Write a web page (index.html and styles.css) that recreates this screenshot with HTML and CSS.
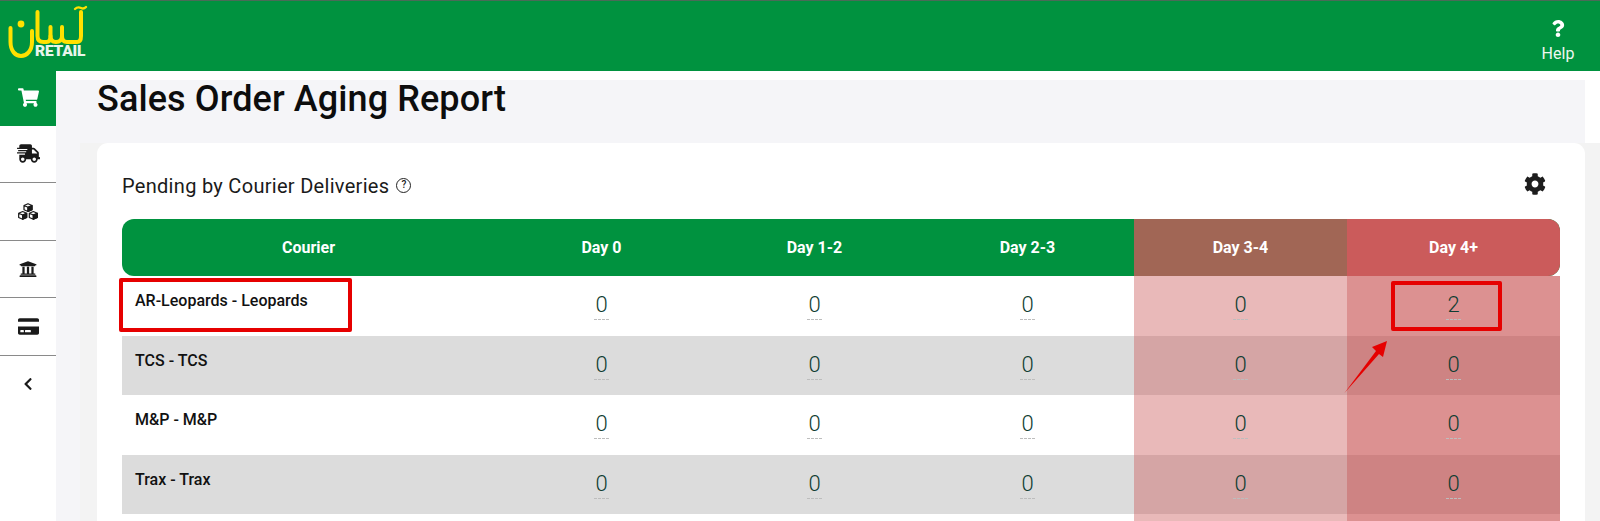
FILE: index.html
```html
<!DOCTYPE html>
<html lang="en">
<head>
  <meta charset="UTF-8" />
  <meta name="viewport" content="width=device-width, initial-scale=1.0"/>
  <title>Sales Order Aging Report</title>
  <link rel="stylesheet" href="styles.css">
</head>
<body>
  <header class="topbar">
    <div class="logo">
      <svg class="logo-mark" viewBox="0 0 90 60" aria-label="Aasan logo">
        <g fill="none" stroke="#ffe100" stroke-width="4" stroke-linecap="round" stroke-linejoin="round">
          <path d="M10.500 28v14c0 9 5 14 10.500 14s11-5 11-14v-11"/>
          <path d="M37.500 12v24c0 4 2 6 6 6h3c3 0 4-2 4-6v-9"/>
          <path d="M50.500 36c0 4 2 6 5.500 6s6-2 6-6v-9"/>
          <path d="M62 36c0 4 2 6 5 6h10c3 0 4-2 4-6V12"/>
          <path d="M75 9c2-2 4-2 6-1s3 1 5-1" stroke-width="2.400"/>
        </g>
        <circle cx="21" cy="24" r="3.400" fill="#ffe100"/>
      </svg>
      <span class="logo-text">RETAIL</span>
    </div>
    <a class="help" href="#">
      <svg class="help-icon" viewBox="0 0 384 512"><path d="M202.021 0C122.202 0 70.503 32.703 29.914 91.026c-7.363 10.58-5.093 25.086 5.178 32.874l43.138 32.709c10.373 7.865 25.132 6.026 33.253-4.148 25.049-31.381 43.63-49.449 82.757-49.449 30.764 0 68.816 19.799 68.816 49.631 0 22.552-18.617 34.134-48.993 51.164-35.423 19.86-82.299 44.576-82.299 106.405V320c0 13.255 10.745 24 24 24h72.471c13.255 0 24-10.745 24-24v-5.773c0-42.86 125.268-44.645 125.268-160.627C377.504 66.256 286.902 0 202.021 0zM192 373.459c-38.196 0-69.271 31.075-69.271 69.271 0 38.195 31.075 69.27 69.271 69.27s69.271-31.075 69.271-69.271-31.075-69.27-69.271-69.27z"/></svg>
      <span>Help</span>
    </a>
  </header>

  <div class="layout">
    <nav class="sidebar">
      <a class="nav-item active" href="#">
        <svg class="ic-cart" viewBox="0 0 576 512"><path d="M528.12 301.319l47.273-208C578.806 78.301 567.391 64 551.99 64H159.208l-9.166-44.81C147.758 8.021 137.93 0 126.529 0H24C10.745 0 0 10.745 0 24v16c0 13.255 10.745 24 24 24h69.883l70.248 343.435C147.325 417.1 136 435.222 136 456c0 30.928 25.072 56 56 56s56-25.072 56-56c0-15.674-6.447-29.835-16.824-40h209.647C430.447 426.165 424 440.326 424 456c0 30.928 25.072 56 56 56s56-25.072 56-56c0-22.172-12.888-41.332-31.579-50.405l5.517-24.276c3.413-15.018-8.002-29.319-23.403-29.319H218.117l-6.545-32h293.145c11.206 0 20.92-7.754 23.403-18.681z"/></svg>
      </a>
      <a class="nav-item" href="#">
        <svg class="ic-truck" viewBox="0 0 640 512"><path d="M624 352h-16V243.900c0-12.700-5.100-24.900-14.100-33.900L494 110.100c-9-9-21.200-14.100-33.900-14.100H416V48c0-26.500-21.500-48-48-48H112C85.500 0 64 21.500 64 48v48H8c-4.400 0-8 3.600-8 8v16c0 4.400 3.600 8 8 8h272c4.400 0 8 3.600 8 8v16c0 4.400-3.600 8-8 8H40c-4.400 0-8 3.600-8 8v16c0 4.400 3.600 8 8 8h208c4.400 0 8 3.600 8 8v16c0 4.400-3.600 8-8 8H8c-4.400 0-8 3.600-8 8v16c0 4.400 3.600 8 8 8h208c4.400 0 8 3.600 8 8v16c0 4.400-3.600 8-8 8H64v128c0 53 43 96 96 96s96-43 96-96h128c0 53 43 96 96 96s96-43 96-96h48c8.800 0 16-7.200 16-16v-32c0-8.800-7.200-16-16-16zM160 464c-26.500 0-48-21.500-48-48s21.500-48 48-48 48 21.500 48 48-21.500 48-48 48zm320 0c-26.500 0-48-21.500-48-48s21.500-48 48-48 48 21.500 48 48-21.500 48-48 48zm80-208H416V144h44.100l99.900 99.900V256z"/></svg>
      </a>
      <a class="nav-item" href="#">
        <svg class="ic-cubes" viewBox="1 0.500 18 15">
          <g fill="#1a1a1a" stroke="#1a1a1a" stroke-width="1.100" stroke-linejoin="round">
            <path fill="none" d="M10 1l3.600 1.600v3.800L10 8 6.400 6.400V2.600zM6.400 2.600L10 4.200l3.600-1.600M10 4.200V8"/>
            <path d="M10 4.200l3.600-1.600v3.800L10 8z"/>
            <path fill="none" d="M5.200 8L8.800 9.600v3.800L5.200 15 1.600 13.400V9.600zM1.600 9.600l3.600 1.600 3.600-1.600M5.200 11.200V15"/>
            <path d="M5.200 11.200l3.600-1.600v3.800L5.200 15z"/>
            <path fill="none" d="M14.800 8l3.600 1.600v3.800L14.800 15l-3.600-1.600V9.600zM11.200 9.600l3.600 1.600 3.600-1.600M14.800 11.200V15"/>
            <path d="M14.800 11.200l3.600-1.600v3.800L14.800 15z"/>
          </g>
        </svg>
      </a>
      <a class="nav-item" href="#">
        <svg class="ic-bank" viewBox="0 0 512 512"><path d="M496 128v16a8 8 0 0 1-8 8h-24v12c0 6.627-5.373 12-12 12H60c-6.627 0-12-5.373-12-12v-12H24a8 8 0 0 1-8-8v-16a8 8 0 0 1 4.941-7.392l232-88a7.996 7.996 0 0 1 6.118 0l232 88A8 8 0 0 1 496 128zm-24 304H40c-13.255 0-24 10.745-24 24v16a8 8 0 0 0 8 8h464a8 8 0 0 0 8-8v-16c0-13.255-10.745-24-24-24zM96 192v192H60c-6.627 0-12 5.373-12 12v20h416v-20c0-6.627-5.373-12-12-12h-36V192h-64v192h-64V192h-64v192h-64V192H96z"/></svg>
      </a>
      <a class="nav-item" href="#">
        <svg class="ic-card" viewBox="0 0 576 512"><path d="M0 432c0 26.500 21.500 48 48 48h480c26.500 0 48-21.500 48-48V256H0v176zm192-68c0-6.600 5.400-12 12-12h136c6.600 0 12 5.400 12 12v40c0 6.600-5.400 12-12 12H204c-6.600 0-12-5.400-12-12v-40zm-128 0c0-6.600 5.400-12 12-12h72c6.600 0 12 5.400 12 12v40c0 6.600-5.400 12-12 12H76c-6.600 0-12-5.400-12-12v-40zM576 80v48H0V80c0-26.500 21.500-48 48-48h480c26.500 0 48 21.500 48 48z"/></svg>
      </a>
      <a class="nav-item last" href="#">
        <svg class="ic-back" viewBox="0 0 320 512"><path d="M34.520 239.030L228.870 44.690c9.370-9.370 24.570-9.370 33.940 0l22.670 22.670c9.360 9.360 9.370 24.520.04 33.900L131.490 256l154.020 154.750c9.340 9.380 9.320 24.540-.04 33.900l-22.670 22.670c-9.370 9.370-24.570 9.370-33.940 0L34.520 272.970c-9.370-9.370-9.370-24.570 0-33.940z"/></svg>
      </a>
    </nav>

    <main class="main">
      <div class="page-head">
        <h1>Sales Order Aging Report</h1>
      </div>
      <div class="content">
        <section class="card">
          <div class="card-head">
            <h3>Pending by Courier Deliveries <span class="hint">?</span></h3>
            <svg class="ic-cog" viewBox="0 0 512 512"><path d="M487.400 315.700l-42.600-24.600c4.300-23.200 4.300-47 0-70.200l42.600-24.600c4.900-2.800 7.100-8.600 5.500-14-11.100-35.600-30-67.800-54.700-94.600-3.800-4.100-10-5.100-14.800-2.300L380.800 110c-17.900-15.400-38.500-27.300-60.800-35.100V25.800c0-5.600-3.900-10.500-9.400-11.700-36.700-8.200-74.300-7.800-109.200 0-5.500 1.200-9.400 6.100-9.400 11.700V75c-22.200 7.900-42.800 19.800-60.800 35.100L88.700 85.500c-4.900-2.800-11-1.900-14.800 2.300-24.700 26.700-43.600 58.900-54.700 94.600-1.700 5.400.6 11.200 5.500 14L67.300 221c-4.300 23.200-4.300 47 0 70.200l-42.600 24.600c-4.900 2.800-7.100 8.600-5.500 14 11.100 35.600 30 67.800 54.700 94.600 3.800 4.100 10 5.100 14.800 2.300l42.600-24.600c17.900 15.400 38.500 27.300 60.800 35.100v49.200c0 5.600 3.900 10.500 9.400 11.700 36.700 8.200 74.300 7.800 109.200 0 5.500-1.200 9.400-6.100 9.400-11.700v-49.200c22.200-7.900 42.800-19.800 60.800-35.100l42.600 24.600c4.900 2.800 11 1.900 14.800-2.300 24.700-26.700 43.600-58.900 54.700-94.600 1.500-5.500-.7-11.300-5.600-14.100zM256 336c-44.100 0-80-35.900-80-80s35.900-80 80-80 80 35.900 80 80-35.900 80-80 80z"/></svg>
          </div>

          <div class="aging">
            <div class="row head">
              <div class="cell courier">Courier</div>
              <div class="cell">Day 0</div>
              <div class="cell">Day 1-2</div>
              <div class="cell">Day 2-3</div>
              <div class="cell warn">Day 3-4</div>
              <div class="cell late">Day 4+</div>
            </div>
            <div class="row">
              <div class="cell name">AR-Leopards - Leopards</div>
              <div class="cell"><span class="num">0</span></div>
              <div class="cell"><span class="num">0</span></div>
              <div class="cell"><span class="num">0</span></div>
              <div class="cell warn"><span class="num">0</span></div>
              <div class="cell late"><span class="num">2</span></div>
            </div>
            <div class="row">
              <div class="cell name">TCS - TCS</div>
              <div class="cell"><span class="num">0</span></div>
              <div class="cell"><span class="num">0</span></div>
              <div class="cell"><span class="num">0</span></div>
              <div class="cell warn"><span class="num">0</span></div>
              <div class="cell late"><span class="num">0</span></div>
            </div>
            <div class="row">
              <div class="cell name">M&amp;P - M&amp;P</div>
              <div class="cell"><span class="num">0</span></div>
              <div class="cell"><span class="num">0</span></div>
              <div class="cell"><span class="num">0</span></div>
              <div class="cell warn"><span class="num">0</span></div>
              <div class="cell late"><span class="num">0</span></div>
            </div>
            <div class="row">
              <div class="cell name">Trax - Trax</div>
              <div class="cell"><span class="num">0</span></div>
              <div class="cell"><span class="num">0</span></div>
              <div class="cell"><span class="num">0</span></div>
              <div class="cell warn"><span class="num">0</span></div>
              <div class="cell late"><span class="num">0</span></div>
            </div>
            <div class="row">
              <div class="cell name"></div>
              <div class="cell"></div>
              <div class="cell"></div>
              <div class="cell"></div>
              <div class="cell warn"></div>
              <div class="cell late"></div>
            </div>

            <!-- annotations drawn on top of the table -->
            <div class="mark mark-name"></div>
            <div class="mark mark-value"></div>
            <svg class="arrow" viewBox="0 0 46 54">
              <path d="M0.500 53L32 11l-4-4 15-6-4 16-4-3z" fill="#e60000"/>
            </svg>
          </div>
        </section>
      </div>
    </main>
  </div>
</body>
</html>
```

FILE: styles.css
```css
* {
  box-sizing: border-box;
}
html, body {
  height: 521px;
  overflow: hidden;
}
body {
  margin: 0;
  font-family: 'Roboto', sans-serif;
  background: #fff;
  color: #111;
}

/* top bar */
.topbar {
  height: 71px;
  background: #00923f;
  border-top: 1px solid #4a6b58;
  display: flex;
  justify-content: space-between;
  align-items: flex-start;
}
.logo {
  position: relative;
  width: 90px;
  height: 60px;
  margin-top: -1px;
}
.logo-mark {
  width: 90px;
  height: 60px;
  display: block;
}
.logo-text {
  position: absolute;
  left: 35px;
  top: 44px;
  font-size: 15.500px;
  line-height: 15px;
  font-weight: 900;
  letter-spacing: -0.2px;
  color: #e8f5ec;
}
.help {
  width: 84px;
  padding-top: 19px;
  display: flex;
  flex-direction: column;
  align-items: center;
  gap: 7px;
  color: #eef7f1;
  text-decoration: none;
  font-size: 16px;
  line-height: 19px;
}
.help-icon {
  width: 14px;
  height: 17px;
  fill: #fff;
}

.layout {
  display: flex;
  height: 450px;
}

/* sidebar */
.sidebar {
  width: 56px;
  flex: none;
  background: #fff;
  display: flex;
  flex-direction: column;
}
.nav-item {
  height: 57.5px;
  flex: none;
  display: flex;
  align-items: center;
  justify-content: center;
  border-bottom: 1px solid #8a8a8a;
  fill: #1a1a1a;
}
.nav-item.active {
  height: 54.5px;
  padding-bottom: 2px;
  background: #00923f;
  border-bottom: 0;
  fill: #fff;
}
.nav-item.last {
  border-bottom: 0;
}
.ic-cart { width: 21px; height: 19px; }
.ic-truck { width: 23px; height: 19px; }
.ic-cubes { width: 20px; height: 17px; }
.ic-bank { width: 18px; height: 18px; }
.ic-card { width: 21px; height: 19px; }
.ic-back { width: 10px; height: 14px; }

/* main */
.main {
  flex: 1;
  padding-top: 9px;
  min-width: 0;
}
.page-head {
  height: 63px;
  margin-right: 15px;
  padding-left: 41px;
  background: #f5f5f8;
}
h1 {
  margin: 0;
  font-size: 36px;
  line-height: 38px;
  font-weight: 500;
  letter-spacing: 0.1px;
  color: #0d0d0d;
}
.content {
  height: 378px;
  background: #f3f3f3;
  border-left: 24px solid #f5f5f8;
  padding: 0 15px 0 17px;
}
.card {
  background: #fff;
  height: 100%;
  border-radius: 11px 11px 0 0;
  padding: 0 25px;
  overflow: hidden;
}
.card-head {
  height: 76px;
  display: flex;
  align-items: center;
  justify-content: space-between;
  padding: 5px 14px 0 0;
}
h3 {
  margin: 4px 0 0;
  font-size: 20px;
  font-weight: 400;
  letter-spacing: 0.3px;
  color: #1a1a1a;
  display: flex;
  align-items: center;
  gap: 7px;
}
.hint {
  width: 15px;
  height: 15px;
  border: 1.5px solid #222;
  border-radius: 50%;
  font-size: 10px;
  line-height: 12px;
  font-weight: 500;
  letter-spacing: 0;
  text-align: center;
}
.ic-cog {
  width: 22px;
  height: 22px;
  fill: #1d1d1d;
}

/* aging table */
.aging {
  position: relative;
}
.row {
  display: grid;
  grid-template-columns: 373px repeat(5, 213px);
  height: 59.5px;
  background: #fff;
}
.row:nth-child(odd) {
  background: #dcdcdc;
}
.row.head {
  height: 57px;
  background: #00923f;
  border-radius: 12px;
  color: #fff;
  font-size: 16px;
  font-weight: 700;
}
.row:last-of-type {
  height: 6px;
  background: #fff;
}
.cell {
  display: flex;
  align-items: center;
  justify-content: center;
}
.cell.name {
  display: block;
  padding: 15px 13px 0;
  font-size: 16px;
  line-height: 20px;
  font-weight: 500;
  color: #111;
}
.warn { background: rgba(204, 92, 92, 0.43); }
.late { background: rgba(197, 72, 72, 0.6); }
.head .warn { background: #a16655; }
.head .late {
  background: #cb5b5b;
  border-radius: 0 12px 12px 0;
}
.num {
  font-size: 22px;
  line-height: 24px;
  font-weight: 300;
  color: #0f3d33;
  padding: 2px 1px 2px;
  border-bottom: 1px dashed #bdbdbd;
}

/* red annotations from the screenshot */
.mark {
  position: absolute;
  border: 4px solid #e60000;
  border-radius: 2px;
}
.mark-name {
  left: -3px;
  top: 59px;
  width: 233px;
  height: 54px;
}
.mark-value {
  left: 1269px;
  top: 62px;
  width: 111px;
  height: 50px;
}
.arrow {
  position: absolute;
  left: 1222px;
  top: 121px;
  width: 46px;
  height: 54px;
}
```
